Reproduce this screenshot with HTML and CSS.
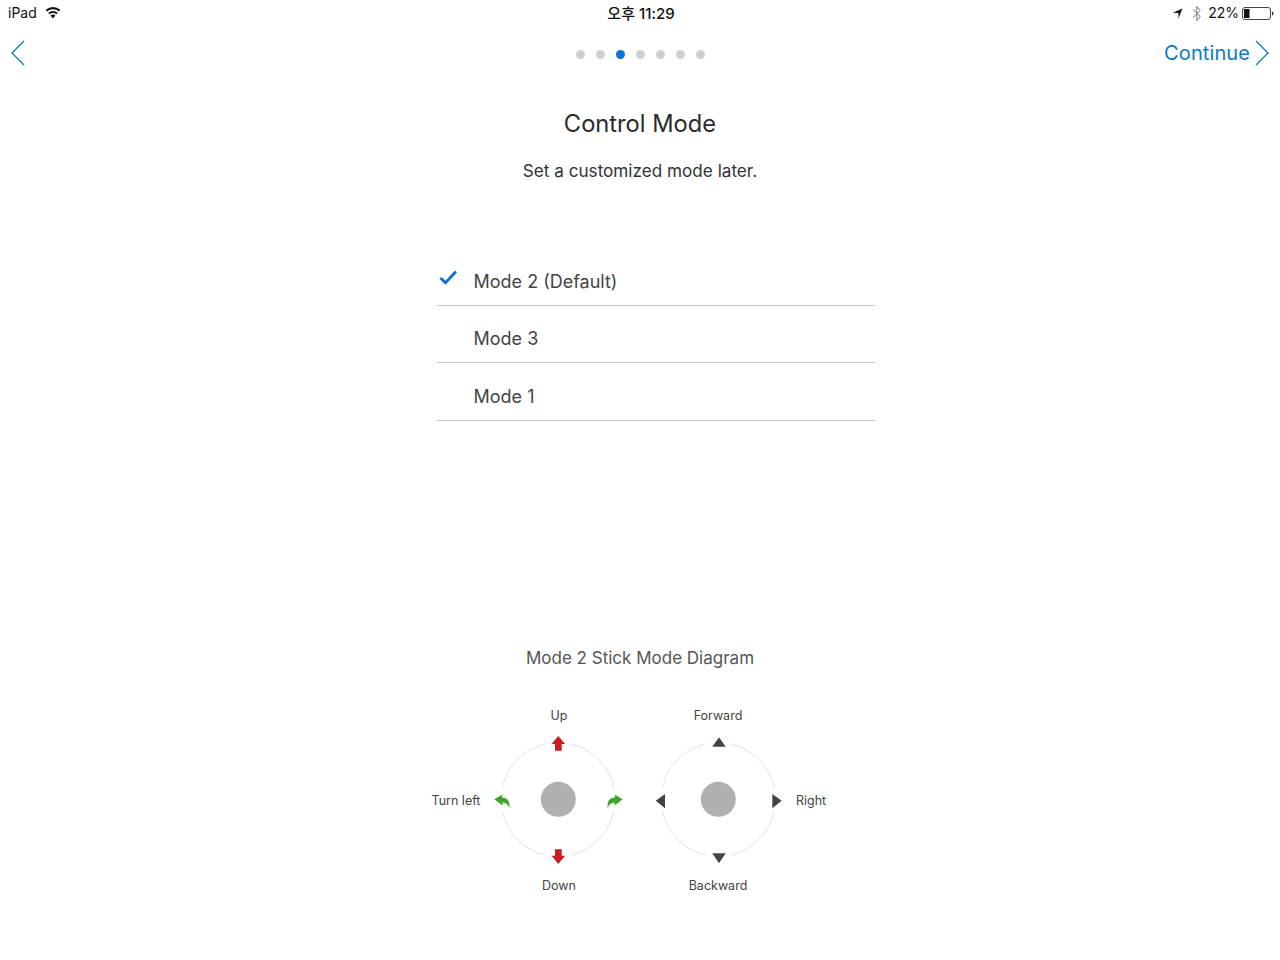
FILE: index.html
```html
<!DOCTYPE html>
<html lang="en">
<head>
<meta charset="utf-8">
<title>Control Mode</title>
<link rel="stylesheet" href="styles.css">
</head>
<body>
<div class="page">
  <header class="status">
    <div class="status-left">
      <span class="stext">iPad</span>
      <svg class="wifi" width="16" height="12" viewBox="0 0 16 12"><path d="M8 11.500 5.600 8.600a3.600 3.600 0 0 1 4.800 0zM4.500 7.300 3.200 5.800a7.200 7.200 0 0 1 9.600 0l-1.300 1.500a5.300 5.300 0 0 0-7 0zM2.100 4.500.6 2.900a11 11 0 0 1 14.800 0l-1.500 1.600a8.900 8.900 0 0 0-11.800 0z" fill="#111"/></svg>
    </div>
    <div class="status-time stext">오후 11:29</div>
    <div class="status-right">
      <svg class="loc" width="11" height="11" viewBox="0 0 11 11"><path d="M10.500.5 6.400 10.500V5L.8 4.800z" fill="#111"/></svg>
      <svg class="bt" width="10" height="17" viewBox="0 0 10 17"><path d="M1 4.500 8.300 11.600 4.800 15.600V1.400L8.300 5.400 1 12.500" fill="none" stroke="#777" stroke-width="1"/></svg>
      <span class="stext">22%</span>
      <svg width="32" height="13" viewBox="0 0 32 13"><rect x=".5" y=".5" width="28" height="12" rx="2.500" fill="#fff" stroke="#444"/><rect x="2" y="2" width="5.500" height="9" fill="#111"/><path d="M30 4.500c1.200.3 1.500 1 1.500 2s-.3 1.700-1.500 2z" fill="#333"/></svg>
    </div>
  </header>

  <nav class="nav">
    <svg class="chev" width="16" height="26" viewBox="0 0 16 26"><path d="M14 1 2 13l12 12" fill="none" stroke="#0a7bc4" stroke-width="1.300"/></svg>
    <div class="dots">
      <span class="dot"></span><span class="dot"></span><span class="dot dot-on"></span><span class="dot"></span><span class="dot"></span><span class="dot"></span><span class="dot"></span>
    </div>
    <div class="continue">
      <span>Continue</span>
      <svg class="chev" width="16" height="26" viewBox="0 0 16 26"><path d="M2 1l12 12L2 25" fill="none" stroke="#0a7bc4" stroke-width="1.300"/></svg>
    </div>
  </nav>

  <main>
    <h1 class="title">Control Mode</h1>
    <p class="subtitle">Set a customized mode later.</p>

    <ul class="modes">
      <li class="mode">
        <svg class="check" width="18" height="15" viewBox="0 0 18 15"><path d="M1.500 8l5 4.800L17 1.500" fill="none" stroke="#0f6fd8" stroke-width="2.800"/></svg>
        <span>Mode 2 (Default)</span>
      </li>
      <li class="mode"><span>Mode 3</span></li>
      <li class="mode"><span>Mode 1</span></li>
    </ul>

    <h2 class="diagram-title">Mode 2 Stick Mode Diagram</h2>

    <svg class="diagram" width="420" height="200" viewBox="0 0 420 200">
      <circle class="ring" cx="133" cy="99.500" r="57"/>
      <circle class="ring" cx="293.300" cy="99.500" r="57"/>
      <circle cx="133.300" cy="99.300" r="17.500" fill="#b0b0b0"/>
      <circle cx="293.300" cy="99.300" r="17.500" fill="#b0b0b0"/>

      <path d="M133.300 36l6.800 8h-3.400v6.700h-6.700V44h-3.400z" fill="#cc1b1f"/>
      <path d="M133.300 164l6.800-8.300h-3.400v-6.400h-6.700v6.400h-3.400z" fill="#cc1b1f"/>

      <path d="M69.300 99.300 77 94.800v2.800c5 0 8.200 3.400 7.300 10.400-1.300-3.500-3.300-5.200-6.800-5.400l0 2.900z" fill="#3ba52c"/>
      <path d="M197.700 99.300 190 94.800v2.800c-5 0-8.200 3.400-7.300 10.400 1.300-3.500 3.300-5.200 6.800-5.400l0 2.900z" fill="#3ba52c"/>

      <path d="M294 37.300l6.700 9.400h-13.400z" fill="#444"/>
      <path d="M294 163.300l6.700-10h-13.400z" fill="#444"/>
      <path d="M230.700 100.800l9.300-6.800v14.300z" fill="#444"/>
      <path d="M356.700 100.800l-9.400-6.800v14.300z" fill="#444"/>

      <text class="lbl" x="134" y="20" text-anchor="middle">Up</text>
      <text class="lbl" x="134" y="190" text-anchor="middle">Down</text>
      <text class="lbl" x="31" y="105" text-anchor="middle">Turn left</text>
      <text class="lbl" x="293" y="20" text-anchor="middle">Forward</text>
      <text class="lbl" x="293" y="190" text-anchor="middle">Backward</text>
      <text class="lbl" x="386" y="105" text-anchor="middle">Right</text>
    </svg>
  </main>
</div>
</body>
</html>
```

FILE: styles.css
```css
* { box-sizing: border-box; }
html, body { margin: 0; padding: 0; background: #fff; }
body { font-family: Inter, "Noto Sans CJK KR", sans-serif; color: #2b2b2b; }
.page { width: 1280px; height: 960px; overflow: hidden; display: flex; flex-direction: column; }

.status { height: 26px; padding: 0 6px 0 8px; display: grid; grid-template-columns: 1fr auto 1fr; align-items: center; font-size: 14px; color: #111; }
.stext { margin-bottom: 2px; }
.status-left { display: flex; align-items: center; gap: 8px; }
.wifi { margin-top: -1px; }
.status-time { font-weight: 500; font-size: 15px; }
.status-right { display: flex; justify-content: flex-end; align-items: center; gap: 3px; }
.loc { margin-right: 3px; }
.bt { margin: 0 3px; }

.nav { height: 54px; padding: 0 10px; display: grid; grid-template-columns: 1fr auto 1fr; align-items: center; }
.chev { display: block; }
.dots { display: flex; gap: 11px; margin-top: 2px; }
.dot { width: 9px; height: 9px; border-radius: 50%; background: #cfcfcf; }
.dot-on { background: #0f6fd8; }
.continue { display: flex; justify-content: flex-end; align-items: center; gap: 4px; font-size: 20px; letter-spacing: .1px; color: #0a7bc4; }

.title { margin: 28px 0 0; height: 32px; line-height: 32px; text-align: center; font-size: 23.700px; font-weight: 400; color: #2b2b2b; }
.subtitle { margin: 19px 0 0; height: 24px; line-height: 24px; text-align: center; font-size: 17.150px; color: #333; }

.modes { list-style: none; margin: 67px 0 0 437px; padding: 0; width: 438px; }
.mode { height: 57.500px; border-bottom: 1px solid #c8c8c8; position: relative; padding: 21.500px 0 0 36.500px; font-size: 18px; line-height: 24px; color: #444; }
.mode:first-child { height: 55.500px; padding-top: 20px; }
.check { position: absolute; left: 2px; top: 20px; }

.diagram-title { margin: 225px 0 0; height: 24px; line-height: 24px; text-align: center; font-size: 17px; font-weight: 400; color: #555; }
.diagram { display: block; margin: 30px 0 0 425px; }
.ring { fill: none; stroke: #e2e2e2; stroke-width: 1; stroke-dasharray: 64.400 25.100; stroke-dashoffset: -12.550; }
.lbl { font-size: 12.500px; fill: #444; }
```
